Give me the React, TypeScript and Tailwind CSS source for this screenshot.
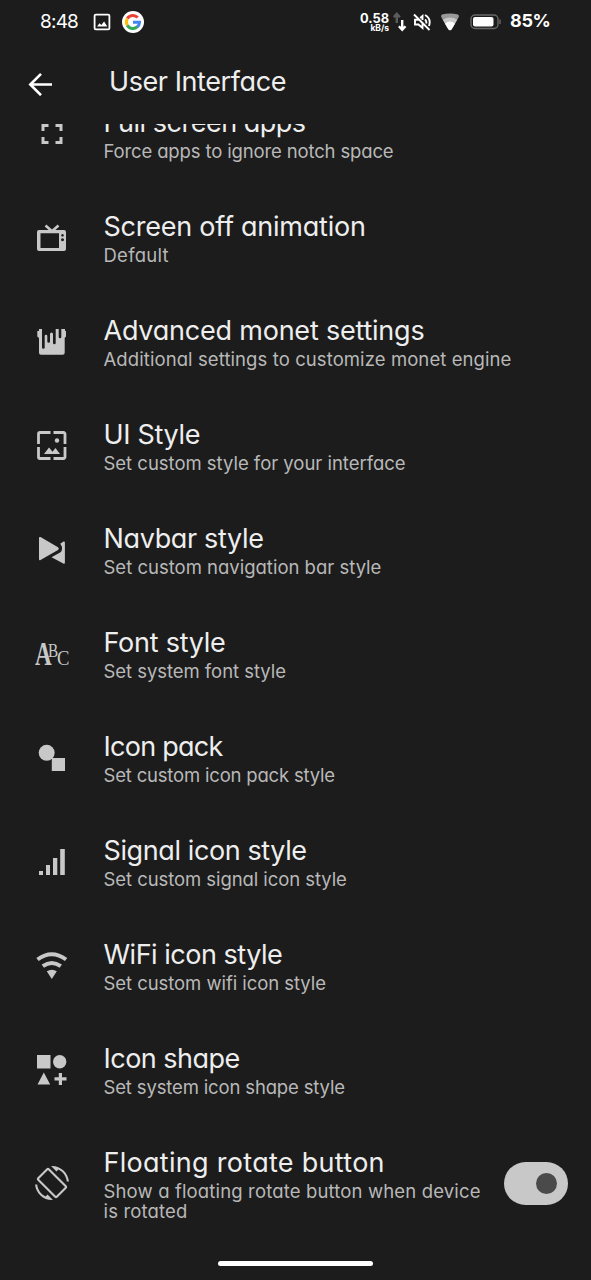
import React from "react";

const G = "#c8c8c8";

function Icon({ children }: { children: React.ReactNode }) {
  return (
    <svg viewBox="0 0 36 36" className="mb-0.5 h-9 w-9 shrink-0" fill={G}>
      {children}
    </svg>
  );
}

const icons = {
  full: (
    <Icon>
      <path d="M7.500 8h7v3h-4v4h-3zM28.500 8h-7v3h4v4h3zM7.500 28h7v-3h-4v-4h-3zM28.500 28h-7v-3h4v-4h3z" />
    </Icon>
  ),
  tv: (
    <Icon>
      <g transform="translate(0 1)">
        <path fillRule="evenodd" d="M5 9h25a2 2 0 0 1 2 2v17a2 2 0 0 1-2 2H5a2 2 0 0 1-2-2V11a2 2 0 0 1 2-2zM6.500 12.200v14.800H25V12.200zM28.500 13a1.300 1.300 0 1 0 .01 0zM28.500 17.200a1.500 1.500 0 1 0 .01 0z" />
        <path d="M11.500 4.500 18 10.200l6.500-5.700" fill="none" stroke={G} strokeWidth="2.600" />
      </g>
    </Icon>
  ),
  monet: (
    <Icon>
      <path d="M5 5h3v18.400a1.350 1.350 0 0 0 2.700 0V12a1.300 1.300 0 0 1 2.600 0v5.400a1.350 1.350 0 0 0 2.700 0V10a1.500 1.500 0 0 1 3 0v9a1.350 1.350 0 0 0 2.700 0V5h3v8a1.300 1.300 0 0 0 2.600 0V5H31v2h1v5.500l-1.300 1.500V28.700a2 2 0 0 1-2 2H7a2 2 0 0 1-2-2V14l-1.700-1.500V7H5z" />
    </Icon>
  ),
  ui: (
    <Icon>
      <path d="M16.500 4.500H6A1.500 1.500 0 0 0 4.500 6v10M19.500 4.500h10A1.500 1.500 0 0 1 31 6v10M4.500 19v10A1.500 1.500 0 0 0 6 30.500h10.500M31 19v10a1.500 1.500 0 0 1-1.500 1.500h-10" fill="none" stroke={G} strokeWidth="2.800" />
      <circle cx="23" cy="12.500" r="2.200" />
      <path d="M10 26l5-6.500 3.500 4.200 3-3.700L26 26z" />
    </Icon>
  ),
  nav: (
    <Icon>
      <path d="M5 6a1 1 0 0 1 1.500-.9L24 15.200q1.800 1.400 0 2.800L6.500 28A1 1 0 0 1 5 27.200z" />
      <path d="M26.200 11.800 29.500 9.500q1.400-.5 1.400 1V30.500q0 1.800-1.600 1L17.500 25.300l8.600-4.700q4.200-3.800.1-8.800z" />
    </Icon>
  ),
  font: (
    <div className="relative mb-0.5 h-9 w-9 shrink-0 font-['Liberation_Serif',serif] text-[#c8c8c8]">
      <span className="absolute left-px top-[4px] origin-left scale-x-[.68] text-[34px]/[28px] font-bold">A</span>
      <span className="absolute left-[14px] top-[6px] origin-left scale-x-[.8] text-[19px]/[18px]">B</span>
      <span className="absolute left-[22.500px] top-[13px] origin-left scale-x-[.93] text-[20px]/[18px]">C</span>
    </div>
  ),
  pack: (
    <Icon>
      <circle cx="12.700" cy="12.800" r="8" />
      <path d="M17.800 18H31v13H17.800z" />
    </Icon>
  ),
  signal: (
    <Icon>
      <path d="M5 27h4v4H5zM12 21h4v10h-4zM19 14h4.300v17H19zM26.200 5h4.600v26h-4.600z" />
    </Icon>
  ),
  wifi: (
    <Icon>
      <path d="M3.500 11.500q14.200-10.500 28.600 0M8.800 18.200q9-6.400 18 0" fill="none" stroke={G} strokeWidth="4" />
      <path d="M12.800 23.200q5-3 10 0l-5 7.800z" />
    </Icon>
  ),
  shape: (
    <Icon>
      <path d="M3 3h13.500v13.500H3zM9.800 20.500l6.400 12H3.500zM24.800 21h3.200v4.300h4.500v3.100H28v4.500h-3.200v-4.500h-4.300v-3.100h4.300z" />
      <circle cx="25.700" cy="9.700" r="6.700" />
    </Icon>
  ),
  rotate: (
    <svg viewBox="0 0 24 24" className="mx-px mb-1 h-[34px] w-[34px] shrink-0" fill={G}>
      <path d="M16.480 2.520c3.270 1.550 5.610 4.720 5.970 8.480h1.500C23.440 4.840 18.290 0 12 0l-.66.030 3.810 3.810 1.330-1.320zm-6.250-.77c-.59-.59-1.540-.59-2.120 0L1.750 8.110c-.59.590-.59 1.540 0 2.120l12.020 12.020c.590.590 1.540.590 2.120 0l6.360-6.360c.590-.590.590-1.540 0-2.120L10.230 1.750zm4.600 19.440L2.810 9.170l6.360-6.360 12.020 12.020-6.360 6.360zm-7.310.29C4.250 19.940 1.910 16.760 1.550 13H.05C.56 19.160 5.710 24 12 24l.66-.030-3.810-3.810-1.330 1.320z" />
    </svg>
  ),
};

type Row = { icon: React.ReactNode; title: string; sub: string; ts: string; ss: string; on?: boolean };

const rows: Row[] = [
  { icon: icons.full, title: "Full screen apps", sub: "Force apps to ignore notch space", ts: "tracking-[-0.49px]", ss: "tracking-[-0.14px]" },
  { icon: icons.tv, title: "Screen off animation", sub: "Default", ts: "tracking-[-0.24px]", ss: "tracking-[0.25px]" },
  { icon: icons.monet, title: "Advanced monet settings", sub: "Additional settings to customize monet engine", ts: "tracking-[-0.22px]", ss: "tracking-[0.09px]" },
  { icon: icons.ui, title: "UI Style", sub: "Set custom style for your interface", ts: "tracking-[-0.33px]", ss: "tracking-[-0.02px]" },
  { icon: icons.nav, title: "Navbar style", sub: "Set custom navigation bar style", ts: "tracking-[-0.34px]", ss: "tracking-[0px]" },
  { icon: icons.font, title: "Font style", sub: "Set system font style", ts: "tracking-[-0.26px]", ss: "tracking-[-0.05px]" },
  { icon: icons.pack, title: "Icon pack", sub: "Set custom icon pack style", ts: "tracking-[-0.74px]", ss: "tracking-[-0.19px]" },
  { icon: icons.signal, title: "Signal icon style", sub: "Set custom signal icon style", ts: "tracking-[-0.4px]", ss: "tracking-[-0.07px]" },
  { icon: icons.wifi, title: "WiFi icon style", sub: "Set custom wifi icon style", ts: "tracking-[-0.49px]", ss: "tracking-[-0.06px]" },
  { icon: icons.shape, title: "Icon shape", sub: "Set system icon shape style", ts: "tracking-[-0.52px]", ss: "tracking-[-0.15px]" },
  { icon: icons.rotate, title: "Floating rotate button", sub: "Show a floating rotate button when device is rotated", ts: "tracking-[0.29px]", ss: "tracking-[0.15px]", on: true },
];

function StatusBar() {
  return (
    <div className="flex h-11 shrink-0 items-center pl-10 text-white">
      <span className="w-[53px] text-[19px] tracking-[-0.8px]">8:48</span>
      <svg viewBox="0 0 18 18" className="h-[18px] w-[18px]">
        <rect x="1.600" y="1.600" width="14.800" height="14.800" rx="1.200" fill="none" stroke="#fff" strokeWidth="1.800" />
        <path d="M4 13.500l2.500-3.300 1.800 1.900 2.800-3.500 3.200 4.900z" fill="#fff" />
      </svg>
      <svg viewBox="0 0 22 22" className="ml-[11px] h-[22px] w-[22px]">
        <circle cx="11" cy="11" r="11" fill="#fff" />
        <g fill="none" strokeWidth="3">
          <path d="M5.300 7.600A6.500 6.500 0 0 1 15.700 6.500" stroke="#ea4335" />
          <path d="M5.300 14.200a6.500 6.500 0 0 1 0-6.500" stroke="#fbbc05" />
          <path d="M15.400 15.700A6.500 6.500 0 0 1 5.300 14.200" stroke="#34a853" />
          <path d="M11 11.300h6.500a6.500 6.500 0 0 1-2.200 4.500" stroke="#4285f4" />
        </g>
      </svg>
      <div className="ml-[214px] flex w-[31px] flex-col items-end font-bold">
        <span className="text-[12.800px]/[11px]">0.58</span>
        <span className="text-[8.500px]/[8px]">kB/s</span>
      </div>
      <svg viewBox="0 0 14 20" className="ml-1 h-5 w-[14px]" fill="none" strokeWidth="2.400">
        <path d="M3.800 11V2M.7 5.200l3.100-3.400 3.100 3.400" stroke="#5c5c5c" />
        <path d="M9.200 8v10M5.900 14.300l3.300 3.500 3.300-3.500" stroke="#fff" />
      </svg>
      <svg viewBox="0 0 18 18" className="ml-1.5 h-[18px] w-[18px]" fill="none" stroke="#fff" strokeWidth="1.900">
        <path d="M1 1.500 16.500 17M9.500 9.800V15L5.500 11.500H2V6.800h3.500M7.200 5 9.500 3v4M12 6.500q1.800 1.500 1.200 4M12 2q6.500 3.500 4 11" />
      </svg>
      <svg viewBox="0 0 18 18" className="ml-2.5 h-[18px] w-[18px]">
        <path d="M1 1.500Q9-.5 17 1.500 18.500 2.500 17.500 4.500L10.800 16q-1.800 2.500-3.600 0L.5 4.500Q-.5 2.500 1 1.500z" fill="#999" />
        <path d="M1.800 6.700q7.200-4.500 14.400 0L10.800 16q-1.800 2.500-3.600 0z" fill="#c8c8c8" />
        <path d="M4 10.500q5-4 10 0l-3.200 5.500q-1.800 2.500-3.600 0z" fill="#fff" />
      </svg>
      <svg viewBox="0 0 32 16" className="ml-[11px] h-4 w-8">
        <rect x="1" y="1" width="27" height="13.500" rx="4" fill="none" stroke="#686868" strokeWidth="1.400" />
        <rect x="3" y="3" width="20.500" height="9.500" rx="2" fill="#fff" />
        <path d="M30 5.500v4.500" stroke="#686868" strokeWidth="1.400" />
      </svg>
      <span className="mb-[3px] ml-2 text-[18px] font-bold tracking-[-0.3px]">85%</span>
    </div>
  );
}

export default function App() {
  return (
    <div className="flex h-[1280px] w-[591px] flex-col overflow-hidden bg-[#1c1c1c] font-['Inter',sans-serif] [font-feature-settings:'cv11','ss03']">
      <StatusBar />
      <header className="flex h-[80px] shrink-0 items-center pl-7">
        <svg viewBox="0 0 24 24" className="h-6 w-6" fill="none" stroke="#fff" strokeWidth="2.600">
          <path d="M24 12.500H3M13 1.800 2.300 12.500 13 23.200" />
        </svg>
        <h1 className="ml-[57px] pb-[3px] text-[27px] tracking-[-0.42px] text-[#eee]">User Interface</h1>
      </header>
      <main className="flex min-h-0 flex-1 flex-col justify-end overflow-hidden">
        {rows.map((r) => (
          <div key={r.title} className={`flex shrink-0 items-center pl-[34px] ${r.on ? "h-[124px]" : "h-[104px]"}`}>
            {r.icon}
            <div className="ml-[33.500px] w-[400.500px] shrink-0 whitespace-nowrap">
              <div className={`pb-1 text-[27px]/[28px] text-[#eee] ${r.ts}`}>{r.title}</div>
              <div className={`text-[18.500px]/[20px] text-[#b8b8b8] ${r.ss} ${r.on ? "w-[382px] whitespace-normal" : ""}`}>{r.sub}</div>
            </div>
            {r.on && (
              <div className="mb-[3px] flex h-[43px] w-16 items-center justify-end rounded-full bg-[#c8c8c8] pr-[11px]">
                <div className="h-[21px] w-[21px] rounded-full bg-[#4a4a4a]" />
              </div>
            )}
          </div>
        ))}
      </main>
      <footer className="flex h-[33px] shrink-0 items-center justify-center">
        <div className="h-[5px] w-[155px] rounded-full bg-white" />
      </footer>
    </div>
  );
}
